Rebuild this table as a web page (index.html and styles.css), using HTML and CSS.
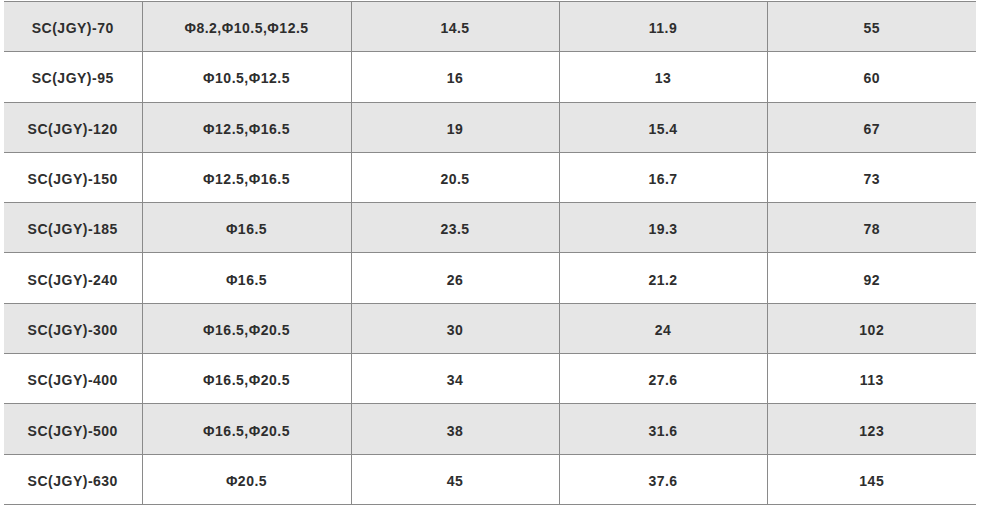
FILE: index.html
```html
<!DOCTYPE html>
<html>
<head>
<meta charset="utf-8">
<link rel="stylesheet" href="styles.css">
</head>
<body>
<table class="spec">
  <colgroup>
    <col class="c1"><col class="c2"><col class="c3"><col class="c4"><col class="c5">
  </colgroup>
  <tbody>
    <tr class="alt"><td>SC(JGY)-70</td><td>Φ8.2,Φ10.5,Φ12.5</td><td>14.5</td><td>11.9</td><td>55</td></tr>
    <tr><td>SC(JGY)-95</td><td>Φ10.5,Φ12.5</td><td>16</td><td>13</td><td>60</td></tr>
    <tr class="alt"><td>SC(JGY)-120</td><td>Φ12.5,Φ16.5</td><td>19</td><td>15.4</td><td>67</td></tr>
    <tr><td>SC(JGY)-150</td><td>Φ12.5,Φ16.5</td><td>20.5</td><td>16.7</td><td>73</td></tr>
    <tr class="alt"><td>SC(JGY)-185</td><td>Φ16.5</td><td>23.5</td><td>19.3</td><td>78</td></tr>
    <tr><td>SC(JGY)-240</td><td>Φ16.5</td><td>26</td><td>21.2</td><td>92</td></tr>
    <tr class="alt"><td>SC(JGY)-300</td><td>Φ16.5,Φ20.5</td><td>30</td><td>24</td><td>102</td></tr>
    <tr><td>SC(JGY)-400</td><td>Φ16.5,Φ20.5</td><td>34</td><td>27.6</td><td>113</td></tr>
    <tr class="alt"><td>SC(JGY)-500</td><td>Φ16.5,Φ20.5</td><td>38</td><td>31.6</td><td>123</td></tr>
    <tr><td>SC(JGY)-630</td><td>Φ20.5</td><td>45</td><td>37.6</td><td>145</td></tr>
  </tbody>
</table>
</body>
</html>
```
FILE: styles.css
```css
html, body {
  margin: 0;
  padding: 0;
  background: #ffffff;
}
body {
  padding: 1px 0 0 4px;
}
.spec {
  border-collapse: collapse;
  table-layout: fixed;
  width: 972px;
  font-family: "Liberation Sans", Arial, sans-serif;
  font-weight: bold;
  font-size: 14px;
  letter-spacing: 0.5px;
  color: #2e2e2e;
}
.c1 { width: 138px; }
.c2 { width: 209px; }
.c3 { width: 208px; }
.c4 { width: 208px; }
.c5 { width: 209px; }
.spec td {
  height: 46.3px;
  padding: 3px 0 0 0;
  text-align: center;
  vertical-align: middle;
  border-top: 1px solid #8a8a8a;
  border-bottom: 1px solid #8a8a8a;
  border-left: 1px solid #8a8a8a;
}
.spec td:first-child {
  border-left: none;
}
.spec tr.alt td {
  background: #e6e6e6;
}
```
